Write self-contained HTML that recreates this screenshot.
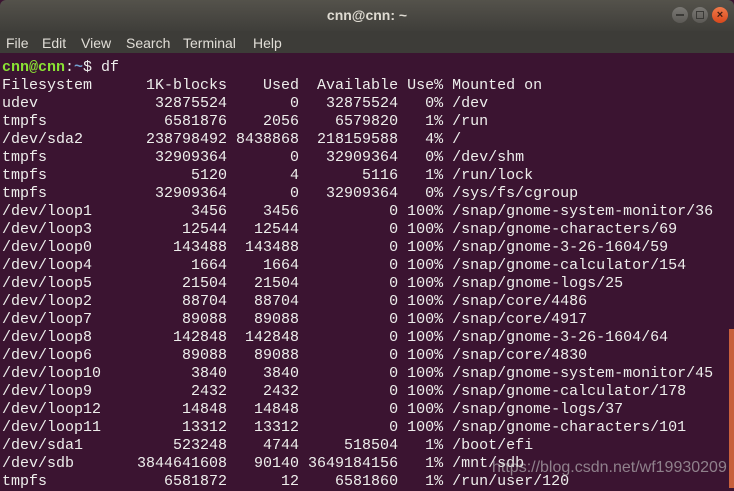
<!DOCTYPE html>
<html><head><meta charset="utf-8"><style>
html,body{margin:0;padding:0;width:734px;height:488px;overflow:hidden;background:#3b1431;}
.title{position:absolute;left:0;top:0;width:734px;height:31px;background:linear-gradient(#54524b,#3f3e3a);border-radius:6px 6px 0 0;}
.title span{position:absolute;left:0;right:0;top:7px;text-align:center;color:#dfdbd2;font:bold 14px "Liberation Sans",sans-serif;}
.menu{position:absolute;left:0;top:31px;width:734px;height:22px;background:#3d3c38;color:#e0ddd6;font:14px "Liberation Sans",sans-serif;}
.menu span{position:absolute;top:4px;}
.btn{position:absolute;top:7px;width:16px;height:16px;border-radius:50%;background:linear-gradient(#7a7874,#5b5955);}
.btn.x{background:linear-gradient(#f07a4a,#d9481c);}
pre{position:absolute;left:2px;top:59px;margin:0;font:15px/18px "Liberation Mono",monospace;color:#eeeeec;}
.g{color:#8ae234;font-weight:bold}.b{color:#729fcf;font-weight:bold}
.sb{position:absolute;left:729px;top:329px;width:5px;height:159px;background:#c8603c;}
.wm{position:absolute;left:492px;top:459px;font:16px "Liberation Sans",sans-serif;color:rgba(200,200,200,0.6);}
</style></head><body>
<div class="title"><span>cnn@cnn: ~</span>
<div class="btn" style="left:672px"><div style="position:absolute;left:4px;top:7px;width:8px;height:2px;background:#3a3936"></div></div>
<div class="btn" style="left:692px"><div style="position:absolute;left:4px;top:4px;width:6px;height:6px;border:1px solid #3a3936"></div></div>
<div class="btn x" style="left:712px"><div style="position:absolute;left:0;top:0;width:16px;text-align:center;font:bold 11px/16px 'Liberation Sans';color:#3a1a10">×</div></div>
</div>
<div class="menu"><span style="left:6px">File</span><span style="left:42px">Edit</span><span style="left:81px">View</span><span style="left:126px">Search</span><span style="left:183px">Terminal</span><span style="left:253px">Help</span></div>
<pre><span class="g">cnn@cnn</span>:<span class="b">~</span>$ df
Filesystem      1K-blocks    Used  Available Use% Mounted on
udev             32875524       0   32875524   0% /dev
tmpfs             6581876    2056    6579820   1% /run
/dev/sda2       238798492 8438868  218159588   4% /
tmpfs            32909364       0   32909364   0% /dev/shm
tmpfs                5120       4       5116   1% /run/lock
tmpfs            32909364       0   32909364   0% /sys/fs/cgroup
/dev/loop1           3456    3456          0 100% /snap/gnome-system-monitor/36
/dev/loop3          12544   12544          0 100% /snap/gnome-characters/69
/dev/loop0         143488  143488          0 100% /snap/gnome-3-26-1604/59
/dev/loop4           1664    1664          0 100% /snap/gnome-calculator/154
/dev/loop5          21504   21504          0 100% /snap/gnome-logs/25
/dev/loop2          88704   88704          0 100% /snap/core/4486
/dev/loop7          89088   89088          0 100% /snap/core/4917
/dev/loop8         142848  142848          0 100% /snap/gnome-3-26-1604/64
/dev/loop6          89088   89088          0 100% /snap/core/4830
/dev/loop10          3840    3840          0 100% /snap/gnome-system-monitor/45
/dev/loop9           2432    2432          0 100% /snap/gnome-calculator/178
/dev/loop12         14848   14848          0 100% /snap/gnome-logs/37
/dev/loop11         13312   13312          0 100% /snap/gnome-characters/101
/dev/sda1          523248    4744     518504   1% /boot/efi
/dev/sdb       3844641608   90140 3649184156   1% /mnt/sdb
tmpfs             6581872      12    6581860   1% /run/user/120</pre>
<div class="sb"></div>
<div class="wm">https://blog.csdn.net/wf19930209</div>
</body></html>
